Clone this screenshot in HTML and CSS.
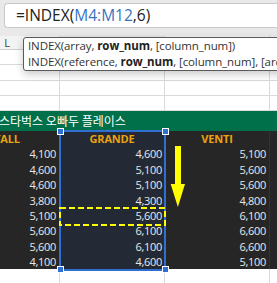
FILE: index.html
```html
<!DOCTYPE html>
<html>
<head>
<meta charset="utf-8">
<link rel="stylesheet" href="styles.css">
</head>
<body>
<div class="page">
  <div class="formula-area">
    <div class="formula-box"><span class="fx">=INDEX(</span><span class="ref">M4:M12</span><span class="fx">,6)</span></div>
  </div>
  <div class="sheet">
    <div class="colhdr">L</div><div class="colhdr sel"></div><div class="colhdr"></div><div class="colhdr"></div>
    <div class="c"></div><div class="c"></div><div class="c"></div><div class="c"></div>
    <div class="c"></div><div class="c"></div><div class="c"></div><div class="c"></div>
    <div class="c"></div><div class="c"></div><div class="c"></div><div class="c"></div>
    <div class="c"></div><div class="c"></div><div class="c"></div><div class="c"></div>
    <div class="band">스타벅스 오빠두 플레이스</div>
    <div class="d h">TALL</div><div class="d h m">GRANDE</div><div class="d h">VENTI</div><div class="d"></div>
    <div class="d">4,100</div><div class="d m">4,600</div><div class="d">5,100</div><div class="d"></div>
    <div class="d">4,600</div><div class="d m">5,100</div><div class="d">5,600</div><div class="d"></div>
    <div class="d">4,600</div><div class="d m">5,100</div><div class="d">5,600</div><div class="d"></div>
    <div class="d">3,800</div><div class="d m">4,300</div><div class="d">4,800</div><div class="d"></div>
    <div class="d">5,100</div><div class="d m">5,600</div><div class="d">6,100</div><div class="d"></div>
    <div class="d">5,600</div><div class="d m">6,100</div><div class="d">6,600</div><div class="d"></div>
    <div class="d">5,600</div><div class="d m">6,100</div><div class="d">6,600</div><div class="d"></div>
    <div class="d">4,100</div><div class="d m">4,600</div><div class="d">5,100</div><div class="d"></div>
    <div class="c"></div><div class="c"></div><div class="c"></div><div class="c"></div>
  </div>

  <div class="tooltip">
    <div class="tip-line">INDEX(array, <b>row_num</b>, [column_num])</div>
    <div class="tip-line">INDEX(reference, <b>row_num</b>, [column_num], [area_num])</div>
  </div>

  <div class="range"></div>
  <div class="handle h-tl"></div>
  <div class="handle h-tr"></div>
  <div class="handle h-bl"></div>
  <div class="handle h-br"></div>

  <svg class="dashbox" width="107" height="19" viewBox="0 0 107 19">
    <rect x="1" y="1" width="105" height="17" fill="none" stroke="#ffff00" stroke-width="2" stroke-dasharray="6 3"/>
  </svg>

  <svg class="arrow" width="16" height="64" viewBox="0 0 16 64">
    <rect x="5" y="1" width="6" height="39" fill="#ffff00"/>
    <polygon points="0.7,39 15,39 7.9,62" fill="#ffff00"/>
  </svg>
</div>
</body>
</html>
```
FILE: styles.css
```css
* { box-sizing: border-box; }
html, body { margin: 0; padding: 0; }
body {
  width: 277px;
  height: 283px;
  overflow: hidden;
  background: #ffffff;
  font-family: "Open Sans", "Noto Sans", sans-serif;
}
.page {
  position: relative;
  width: 277px;
  height: 283px;
  overflow: hidden;
}
.formula-area {
  height: 36px;
  background: #e9e9e9;
  padding: 3px 0 0 4px;
}
.formula-box {
  height: 25px;
  background: #ffffff;
  border: 1px solid #c9c9c9;
  border-right: none;
  border-radius: 4px 0 0 4px;
  padding-left: 11px;
  font-size: 15.5px;
  line-height: 23px;
  color: #222222;
  white-space: nowrap;
}
.ref { color: #3a72c2; }

.sheet {
  margin-left: -45px;
  width: 420px;
  display: grid;
  grid-template-columns: 105px 105px 105px 105px;
  grid-template-rows: 14px repeat(4, 15.25px) 20px repeat(9, 15.375px) 20px;
}
.colhdr {
  background: #f3f3f3;
  border-right: 1px solid #d6d6d6;
  border-bottom: 1px solid #d0d0d0;
  font-size: 11px;
  line-height: 14px;
  color: #444444;
  text-align: center;
}
.colhdr.sel { background: #e2e2e2; }
.c {
  border-right: 1px solid #dadada;
  border-bottom: 1px solid #dadada;
}
.band {
  grid-column: 1 / span 4;
  background: #00704a;
  color: #ffffff;
  font-family: "Noto Sans CJK KR", sans-serif;
  font-size: 12px;
  line-height: 20px;
  padding-left: 44px;
  white-space: nowrap;
}
.d {
  background: #262626;
  color: #e9e9e9;
  font-family: "Open Sans", sans-serif;
  font-size: 11px;
  line-height: 15px;
  text-align: right;
  padding-right: 3px;
  border-right: 1px solid #333333;
  white-space: nowrap;
  letter-spacing: -0.3px;
}
.d.m { background: #232935; padding-right: 2px; }
.d.h {
  text-align: center;
  color: #eaa20e;
  font-weight: 700;
  padding-right: 0;
  letter-spacing: -0.2px;
}

.tooltip {
  position: absolute;
  left: 23px;
  top: 37px;
  width: 290px;
  height: 34px;
  background: #ffffff;
  border: 1px solid #5a5a5a;
  border-radius: 3px;
  box-shadow: 0 3px 8px rgba(0,0,0,0.22);
  padding-left: 4px;
  font-family: "Open Sans", sans-serif;
  font-size: 11.5px;
  letter-spacing: -0.1px;
  color: #333333;
  white-space: nowrap;
}
.tip-line { line-height: 16px; }
.tip-line b { font-weight: 700; color: #222222; }

.range {
  position: absolute;
  left: 59px;
  top: 130px;
  width: 107px;
  height: 141px;
  border: 2px solid #2f6fd1;
}
.handle {
  position: absolute;
  width: 7px;
  height: 7px;
  background: #2f6fd1;
  border: 1px solid #ffffff;
}
.h-tl { left: 57px; top: 128px; }
.h-tr { left: 162px; top: 128px; }
.h-bl { left: 57px; top: 266px; }
.h-br { left: 162px; top: 266px; }

.dashbox {
  position: absolute;
  left: 59px;
  top: 207px;
}
.arrow {
  position: absolute;
  left: 170px;
  top: 145px;
}
```
